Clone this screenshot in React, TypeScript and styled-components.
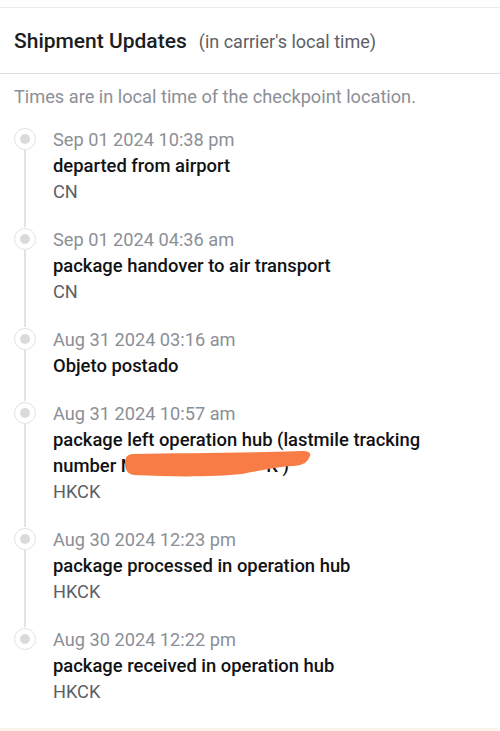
import React from "react";
import styled, { createGlobalStyle } from "styled-components";

const Global = createGlobalStyle`
  html, body { margin: 0; padding: 0; background: #ffffff; }
  body { font-family: Roboto, "Noto Sans", "Liberation Sans", sans-serif; -webkit-font-smoothing: antialiased; }
`;

const Page = styled.div`
  width: 500px;
  padding-top: 7px;
  background: #ffffff;
`;

const Card = styled.section`
  border-top: 1px solid #ebebeb;
  background: #ffffff;
`;

const Header = styled.header`
  height: 66px;
  display: flex;
  align-items: center;
  padding: 0 14px;
  box-sizing: border-box;
  border-bottom: 1px solid #dcdde0;
`;

const HeadRow = styled.div`
  display: flex;
  align-items: baseline;
`;

const Title = styled.h2`
  margin: 0;
  font-size: 21px;
  font-weight: 500;
  color: #1c1d1f;
`;

const Subtitle = styled.span`
  margin-left: 12px;
  font-size: 18px;
  color: #5d6066;
`;

const Note = styled.p`
  margin: 0;
  padding: 11px 14px 18px;
  font-size: 18.2px;
  line-height: 24px;
  color: #8b8f96;
`;

const List = styled.ol`
  list-style: none;
  margin: 0;
  padding: 0;
`;

const Item = styled.li`
  display: flex;
`;

const Marker = styled.div`
  width: 53px;
  flex: none;
  display: flex;
  flex-direction: column;
  align-items: center;
  padding-right: 3px;
  box-sizing: border-box;
  padding-top: 1px;
`;

const Ring = styled.div`
  width: 20px;
  height: 20px;
  flex: none;
  border: 1.5px solid #e2e3e5;
  border-radius: 50%;
  display: flex;
  align-items: center;
  justify-content: center;
  background: #fff;
`;

const Dot = styled.div`
  width: 10px;
  height: 10px;
  border-radius: 50%;
  background: #d9dadc;
`;

const Rail = styled.div<{ $hidden?: boolean }>`
  flex: 1;
  width: 1.5px;
  background: ${(p) => (p.$hidden ? "transparent" : "#e2e3e5")};
`;

const Body = styled.div<{ $last?: boolean }>`
  flex: 1;
  padding-bottom: ${(p) => (p.$last ? "23px" : "22px")};
  padding-right: 14px;
`;

const When = styled.div`
  font-size: 18.2px;
  line-height: 26px;
  color: #8b8f96;
`;

const What = styled.div`
  font-size: 18.4px;
  line-height: 26px;
  font-weight: 500;
  color: #111214;
`;

const Where = styled.div`
  font-size: 18.2px;
  line-height: 26px;
  color: #5d6066;
`;

const Redacted = styled.span`
  position: relative;
  display: inline-block;
`;

const Scribble = styled.svg`
  position: absolute;
  left: 3px;
  top: -1px;
  overflow: visible;
`;

const Footer = styled.div`
  height: 4px;
  background: #fdf5ec;
  margin-right: 1px;
`;

type Ev = { when: string; what: React.ReactNode; where?: string };

const events: Ev[] = [
  { when: "Sep 01 2024 10:38 pm", what: "departed from airport", where: "CN" },
  { when: "Sep 01 2024 04:36 am", what: "package handover to air transport", where: "CN" },
  { when: "Aug 31 2024 03:16 am", what: "Objeto postado" },
  {
    when: "Aug 31 2024 10:57 am",
    what: (
      <>
        package left operation hub (lastmile tracking
        <br />
        number{" "}
        <Redacted>
          N&nbsp;&nbsp;&nbsp;&nbsp;&nbsp;&nbsp;&nbsp;&nbsp;&nbsp;&nbsp;&nbsp;&nbsp;&nbsp;&nbsp;&nbsp;&nbsp;&nbsp;&nbsp;&nbsp;&nbsp;&nbsp;&nbsp;&nbsp;&nbsp;&nbsp;&nbsp;&nbsp;&nbsp;&nbsp;K )
          <Scribble width="188" height="26" viewBox="0 0 188 26">
            <path
              d="M1 12 C1 5 3 3 8 2 C60 1 120 1 178 -1 C186 -1 188 2 185 6 C183 10 180 13 170 14 C150 15 135 19 118 22 C90 25 50 25 10 23 C3 22 1 17 1 12 Z"
              fill="#f87c45"
            />
          </Scribble>
        </Redacted>
      </>
    ),
    where: "HKCK",
  },
  { when: "Aug 30 2024 12:23 pm", what: "package processed in operation hub", where: "HKCK" },
  { when: "Aug 30 2024 12:22 pm", what: "package received in operation hub", where: "HKCK" },
];

export default function App() {
  return (
    <Page>
      <Global />
      <Card>
        <Header>
          <HeadRow>
            <Title>Shipment Updates</Title>
            <Subtitle>(in carrier's local time)</Subtitle>
          </HeadRow>
        </Header>
        <Note>Times are in local time of the checkpoint location.</Note>
        <List>
          {events.map((e, i) => {
            const last = i === events.length - 1;
            return (
              <Item key={i}>
                <Marker>
                  <Ring>
                    <Dot />
                  </Ring>
                  <Rail $hidden={last} />
                </Marker>
                <Body $last={last}>
                  <When>{e.when}</When>
                  <What>{e.what}</What>
                  {e.where && <Where>{e.where}</Where>}
                </Body>
              </Item>
            );
          })}
        </List>
        <Footer />
      </Card>
    </Page>
  );
}
